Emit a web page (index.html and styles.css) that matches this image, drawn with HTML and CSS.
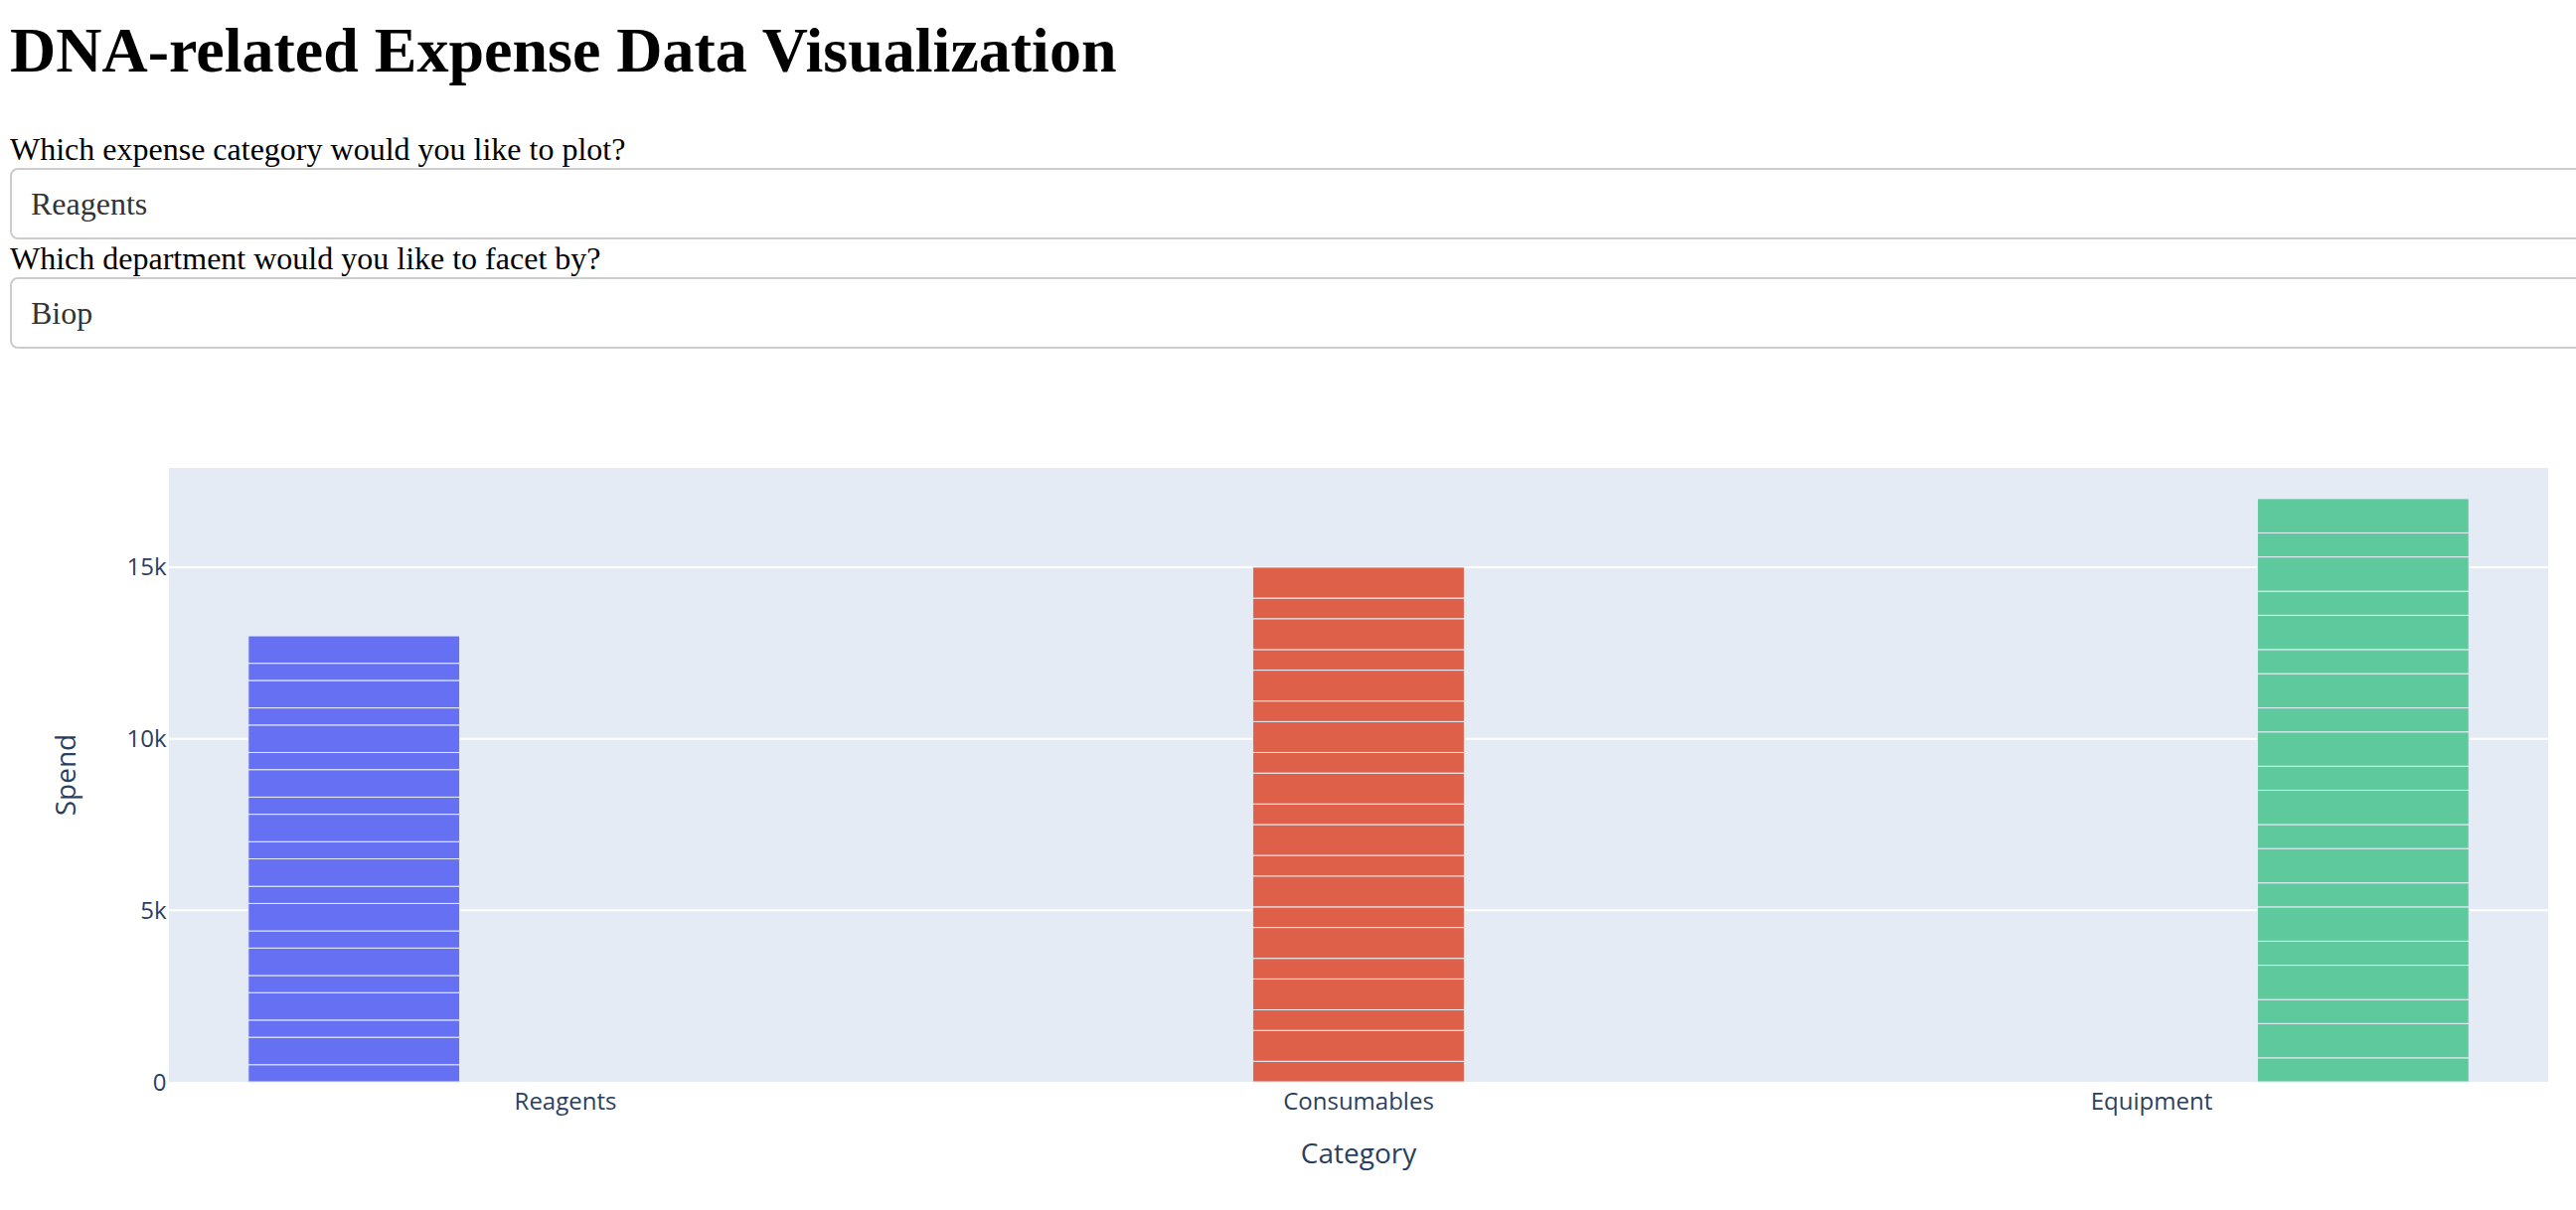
FILE: index.html
```html
<!DOCTYPE html>
<html lang="en">
<head>
    <meta charset="UTF-8">
    <meta name="viewport" content="width=device-width, initial-scale=1.0">
    <title>DNA-related Expense Data Visualization</title>
    <link rel="stylesheet" href="styles.css">
</head>
<body>
    <div class="app">
        <h1>DNA-related Expense Data Visualization</h1>

        <label for="category">Which expense category would you like to plot?</label>
        <div class="dropdown" id="category">
            <div class="dropdown-value">Reagents</div>
        </div>

        <label for="department">Which department would you like to facet by?</label>
        <div class="dropdown" id="department">
            <div class="dropdown-value">Biop</div>
        </div>

        <div class="graph">
            <svg id="chart" width="2714" height="900" viewBox="0 0 2714 900">
                <rect class="plot-bg" x="160" y="120" width="2394" height="618"></rect>
                <g id="grid"></g>
                <g id="bars"></g>
                <g id="yticks"></g>
                <g class="xticks">
                    <text class="tick" x="559" y="766" text-anchor="middle">Reagents</text>
                    <text class="tick" x="1357" y="766" text-anchor="middle">Consumables</text>
                    <text class="tick" x="2155" y="766" text-anchor="middle">Equipment</text>
                </g>
                <text class="axis-title" x="1357" y="820" text-anchor="middle">Category</text>
                <text class="axis-title" x="66" y="429" text-anchor="middle" transform="rotate(-90 66 429)">Spend</text>
            </svg>
        </div>
    </div>

    <script>
        var NS = "http://www.w3.org/2000/svg";
        var plot = { left: 160, top: 120, width: 2394, height: 618, max: 17894.7 };
        var k = plot.height / plot.max;
        var bottom = plot.top + plot.height;

        // una barra por categoria, cada una hecha de 20 filas apiladas
        var categorias = [
            { color: "#6670f2", filas: [500, 800], offset: -1 },
            { color: "#df6048", filas: [600, 900], offset: 0 },
            { color: "#5dc99c", filas: [700, 1000], offset: 1 }
        ];

        function crear(tag, attrs) {
            var el = document.createElementNS(NS, tag);
            for (var a in attrs) {
                el.setAttribute(a, attrs[a]);
            }
            return el;
        }

        var grid = document.getElementById("grid");
        var yticks = document.getElementById("yticks");
        [0, 5000, 10000, 15000].forEach(function(v) {
            var y = bottom - v * k;
            if (v > 0) {
                grid.appendChild(crear("line", {
                    x1: plot.left, x2: plot.left + plot.width, y1: y, y2: y, "class": "gridline"
                }));
            }
            var t = crear("text", { x: 157.5, y: y + 8.5, "text-anchor": "end", "class": "tick" });
            t.textContent = v === 0 ? "0" : (v / 1000) + "k";
            yticks.appendChild(t);
        });

        var barras = document.getElementById("bars");
        var slot = plot.width / categorias.length;
        var ancho = slot * 0.8 / categorias.length;

        categorias.forEach(function(cat, i) {
            var centro = plot.left + slot * (i + 0.5) + cat.offset * ancho;
            var x = centro - ancho / 2;
            var acumulado = 0;
            for (var j = 0; j < 20; j++) {
                var valor = cat.filas[j % 2];
                var y1 = bottom - acumulado * k;
                acumulado += valor;
                var y2 = bottom - acumulado * k;
                barras.appendChild(crear("rect", {
                    x: x, y: y2, width: ancho, height: y1 - y2,
                    fill: cat.color, "class": "segment"
                }));
            }
        });
    </script>
</body>
</html>
```

FILE: styles.css
```css
html {
    overflow: hidden;
}

body {
    margin: 0;
    padding: 14px 0 0 10px;
    font-family: "Liberation Serif", "Times New Roman", serif;
    font-size: 32px;
    color: #000;
    background-color: #fff;
}

.app {
    width: 2714px;
}

h1 {
    font-size: 64px;
    font-weight: bold;
    margin: 0 0 43px;
}

label {
    display: block;
    line-height: 38px;
}

.dropdown {
    box-sizing: border-box;
    height: 72px;
    display: flex;
    align-items: center;
    padding: 0 19px;
    border: 2px solid #ccc;
    border-radius: 8px;
    color: #333;
    background-color: #fff;
}

.graph {
    height: 900px;
}

.graph svg {
    display: block;
}

.plot-bg {
    fill: #e5ebf5;
}

.gridline {
    stroke: #fff;
    stroke-width: 2;
}

.segment {
    stroke: #e5ecf6;
    stroke-width: 1;
}

.tick {
    font-family: "Open Sans", Verdana, Arial, sans-serif;
    font-size: 24px;
    fill: #2a3f5f;
}

.axis-title {
    font-family: "Open Sans", Verdana, Arial, sans-serif;
    font-size: 28px;
    fill: #2a3f5f;
}
```
